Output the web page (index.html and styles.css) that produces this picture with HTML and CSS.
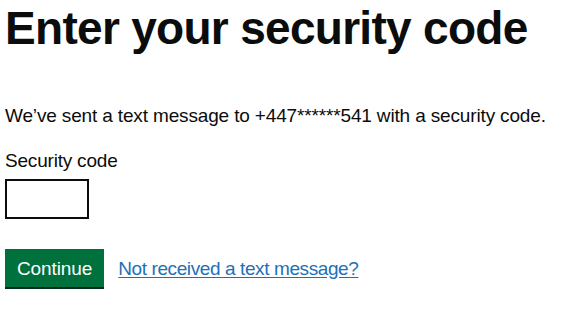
FILE: index.html
```
<!DOCTYPE html>
<html lang="en">
<head>
<meta charset="utf-8">
<title>Enter your security code</title>
<link rel="stylesheet" href="styles.css">
</head>
<body>
<main class="page">
  <h1 class="heading-xl">Enter your security code</h1>
  <p class="body">We’ve sent a text message to +447******541 with a security code.</p>
  <div class="form-group">
    <label class="label" for="code">Security code</label>
    <input class="input" id="code" name="code" type="text" inputmode="numeric" autocomplete="one-time-code">
  </div>
  <div class="button-group">
    <button class="button" type="submit">Continue</button>
    <a class="link" href="#">Not received a text message?</a>
  </div>
</main>
</body>
</html>
```

FILE: styles.css
```
html, body {
  margin: 0;
  padding: 0;
  background: #ffffff;
}

.page {
  padding: 3px 5px 0 5px;
  font-family: "Liberation Sans", Arial, sans-serif;
  color: #0b0c0c;
}

.heading-xl {
  margin: 0 0 50px 0;
  font-size: 46px;
  line-height: 50px;
  font-weight: 700;
  letter-spacing: -0.7px;
}

.body {
  margin: 0 0 20px 0;
  font-size: 19px;
  line-height: 25px;
  letter-spacing: -0.15px;
}

.form-group {
  display: flex;
  flex-direction: column;
  align-items: flex-start;
  margin-bottom: 30px;
}

.label {
  display: block;
  font-size: 19px;
  line-height: 25px;
  margin-bottom: 6px;
  letter-spacing: -0.2px;
}

.input {
  box-sizing: border-box;
  width: 84px;
  height: 40px;
  margin: 0;
  padding: 5px;
  border: 2px solid #0b0c0c;
  border-radius: 0;
  font-family: inherit;
  font-size: 19px;
  background: #ffffff;
}

.button-group {
  display: flex;
  align-items: center;
  gap: 14px;
}

.button {
  box-sizing: border-box;
  height: 38px;
  margin: 0 0 2px 0;
  padding: 6px 10px 5px;
  border: 2px solid transparent;
  border-radius: 0;
  background: #00703c;
  box-shadow: 0 2px 0 #002d18;
  color: #ffffff;
  font-family: inherit;
  font-size: 19px;
  line-height: 22px;
  letter-spacing: -0.1px;
  cursor: pointer;
}

.link {
  color: #1d70b8;
  font-size: 19px;
  line-height: 25px;
  letter-spacing: -0.4px;
  text-decoration: underline;
  text-underline-offset: 2px;
  margin-bottom: 2px;
}
```
